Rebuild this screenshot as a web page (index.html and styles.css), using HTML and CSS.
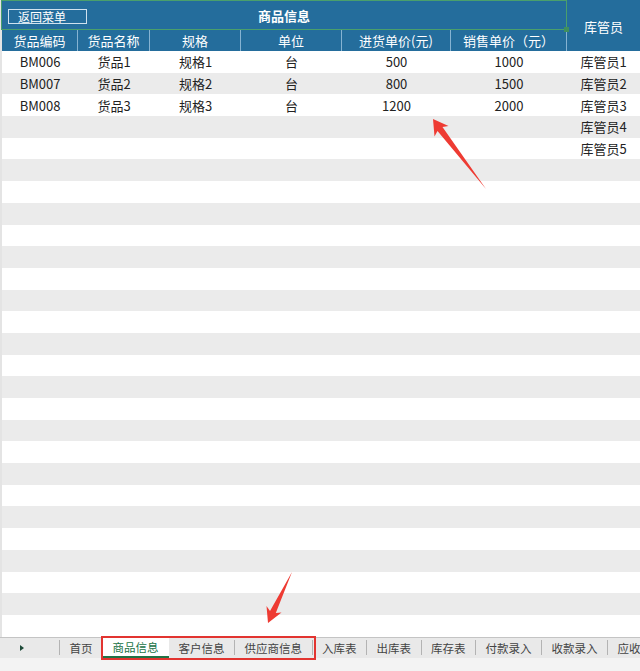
FILE: index.html
```html
<!DOCTYPE html>
<html lang="zh-CN">
<head>
<meta charset="utf-8">
<title>商品信息</title>
<link rel="stylesheet" href="styles.css">
</head>
<body>
<div class="sheet">
  <div class="head">
    <div class="title-cell">
      <span class="back">返回菜单</span>
      <span class="title">商品信息</span>
      <span class="handle"></span>
    </div>
    <div class="keeper-h">库管员</div>
    <div class="h first">货品编码</div>
    <div class="h">货品名称</div>
    <div class="h">规格</div>
    <div class="h">单位</div>
    <div class="h">进货单价(元)</div>
    <div class="h">销售单价（元）</div>
  </div>
  <div class="rows">
    <div class="row"><span>BM006</span><span>货品1</span><span>规格1</span><span>台</span><span>500</span><span>1000</span><span>库管员1</span></div>
    <div class="row"><span>BM007</span><span>货品2</span><span>规格2</span><span>台</span><span>800</span><span>1500</span><span>库管员2</span></div>
    <div class="row"><span>BM008</span><span>货品3</span><span>规格3</span><span>台</span><span>1200</span><span>2000</span><span>库管员3</span></div>
    <div class="row"><span></span><span></span><span></span><span></span><span></span><span></span><span>库管员4</span></div>
    <div class="row"><span></span><span></span><span></span><span></span><span></span><span></span><span>库管员5</span></div>
    <div class="row"></div><div class="row"></div><div class="row"></div><div class="row"></div>
    <div class="row"></div><div class="row"></div><div class="row"></div><div class="row"></div>
    <div class="row"></div><div class="row"></div><div class="row"></div><div class="row"></div>
    <div class="row"></div><div class="row"></div><div class="row"></div><div class="row"></div>
    <div class="row"></div><div class="row"></div><div class="row"></div><div class="row"></div>
    <div class="row"></div><div class="row"></div>
  </div>
</div>
<div class="tabs">
  <div class="nav"><span class="tri"></span></div>
  <span class="sep"></span>
  <div class="tab">首页</div>
  <div class="tab active">商品信息</div>
  <div class="tab">客户信息</div>
  <span class="sep"></span>
  <div class="tab">供应商信息</div>
  <span class="sep"></span>
  <div class="tab">入库表</div>
  <span class="sep"></span>
  <div class="tab">出库表</div>
  <span class="sep"></span>
  <div class="tab">库存表</div>
  <span class="sep"></span>
  <div class="tab">付款录入</div>
  <span class="sep"></span>
  <div class="tab">收款录入</div>
  <span class="sep"></span>
  <div class="tab">应收款</div>
</div>
<div class="status"></div>
<div class="redbox"></div>
<svg class="arrows" width="640" height="671" viewBox="0 0 640 671">
  <polygon points="433,119 434.5,136.5 437.5,131 486,189 442.5,127 448.5,126" fill="#ee3b33"/>
  <polygon points="268,623 281.5,612.5 275.8,613 292,572 270,611 266.5,606" fill="#ee3b33"/>
</svg>
</body>
</html>
```
FILE: styles.css
```css
* { box-sizing: border-box; }
html, body { margin: 0; padding: 0; }
body {
  width: 640px;
  height: 671px;
  overflow: hidden;
  background: #e4e4e4;
  font-family: "Noto Sans CJK SC", "Noto Sans", sans-serif;
  color: #222;
  position: relative;
}
.sheet {
  margin-left: 2px;
  background: #fff;
}
.head {
  display: grid;
  grid-template-columns: 76px 72px 91px 101px 109px 116px 1fr;
  grid-template-rows: 30px 21px;
  background: #246d9c;
  color: #fff;
}
.title-cell {
  grid-column: 1 / 7;
  grid-row: 1;
  position: relative;
  border: 1px solid #4a9f6c;
  margin-left: -1px;
  display: flex;
  align-items: center;
  justify-content: center;
}
.title {
  font-size: 13px;
  font-weight: bold;
  line-height: 1;
}
.back {
  position: absolute;
  left: 6px;
  top: 8px;
  width: 79px;
  height: 15px;
  border: 1px solid #cfe2ef;
  font-size: 12px;
  line-height: 13px;
  padding-left: 9px;
}
.handle {
  position: absolute;
  right: -3px;
  bottom: -3px;
  width: 5px;
  height: 5px;
  background: #3f8f5e;
}
.keeper-h {
  grid-column: 7;
  grid-row: 1 / 3;
  display: flex;
  align-items: center;
  justify-content: center;
  font-size: 13px;
  padding-top: 2px;
}
.h {
  font-size: 13px;
  display: flex;
  align-items: center;
  justify-content: center;
  line-height: 1;
  border-right: 1px solid #86b3d2;
}
.rows {
  box-shadow: inset 1px 0 #a8a8a8;
}
.row {
  display: grid;
  grid-template-columns: 76px 72px 91px 101px 109px 116px 1fr;
  height: 21.7px;
  align-items: center;
  font-size: 13px;
  line-height: 1;
  background: #fff;
}
.row:nth-child(even) { background: #ebebeb; }
.row span { text-align: center; }
.tabs {
  height: 21px;
  border-top: 1px solid #c4c4c4;
  background: #e9e9e9;
  display: flex;
  align-items: center;
  font-size: 11.5px;
  color: #444;
  white-space: nowrap;
  overflow: hidden;
}
.nav {
  width: 59px;
  flex: none;
  display: flex;
  justify-content: flex-start;
  padding-left: 20px;
}
.tri {
  width: 0;
  height: 0;
  border-left: 4px solid #1e4a38;
  border-top: 3.5px solid transparent;
  border-bottom: 3.5px solid transparent;
}
.sep {
  width: 1px;
  height: 15px;
  background: #b3b3b3;
  flex: none;
}
.tab {
  padding: 0 9.5px;
  height: 20px;
  line-height: 20px;
  flex: none;
}
.tab.active {
  background: #fff;
  color: #217346;
  border-bottom: 2px solid #217346;
  line-height: 19px;
  padding: 0 10.5px;
}
.status {
  height: 14px;
  background: #f3f3f3;
}
.redbox {
  position: absolute;
  left: 101px;
  top: 636px;
  width: 215px;
  height: 24px;
  border: 2px solid #e23430;
}
.arrows {
  position: absolute;
  left: 0;
  top: 0;
  pointer-events: none;
}
```
